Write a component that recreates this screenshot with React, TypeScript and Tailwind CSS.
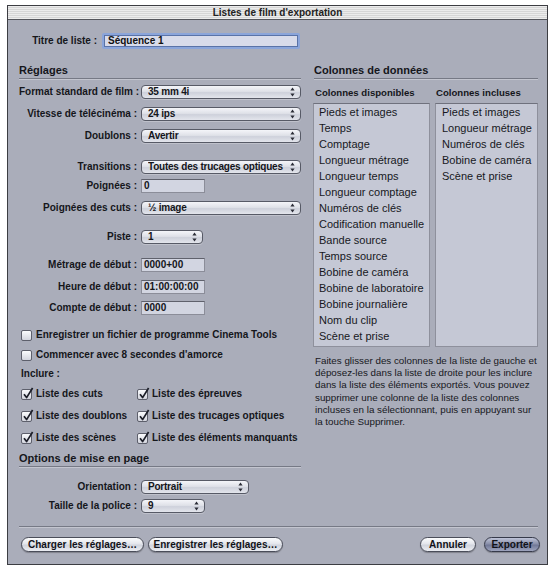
import type { ReactNode } from "react";

const available = [
  "Pieds et images",
  "Temps",
  "Comptage",
  "Longueur métrage",
  "Longueur temps",
  "Longueur comptage",
  "Numéros de clés",
  "Codification manuelle",
  "Bande source",
  "Temps source",
  "Bobine de caméra",
  "Bobine de laboratoire",
  "Bobine journalière",
  "Nom du clip",
  "Scène et prise",
];

const included = [
  "Pieds et images",
  "Longueur métrage",
  "Numéros de clés",
  "Bobine de caméra",
  "Scène et prise",
];

const helpLines = [
  "Faites glisser des colonnes de la liste de gauche et",
  "déposez-les dans la liste de droite pour les inclure",
  "dans la liste des éléments exportés. Vous pouvez",
  "supprimer une colonne de la liste des colonnes",
  "incluses en la sélectionnant, puis en appuyant sur",
  "la touche Supprimer.",
];

function Arrows() {
  return (
    <svg viewBox="0 0 5 10" className="mr-[5px] h-[10px] w-[5px] shrink-0">
      <path d="M2.5 0.5 L4.6 3.4 L0.4 3.4 Z" fill="#2a2c36" />
      <path d="M2.5 9.5 L4.6 6.6 L0.4 6.6 Z" fill="#2a2c36" />
    </svg>
  );
}

function Popup({ value, className }: { value: string; className: string }) {
  return (
    <div
      className={`flex h-[14px] shrink-0 items-center rounded-[4px] border border-[#575a66] bg-[linear-gradient(180deg,#f4f5f9_0%,#dfe1e8_45%,#ced1db_55%,#e3e5ec_100%)] pl-[6px] shadow-[0_1px_0_rgba(255,255,255,0.25)] ${className}`}
    >
      <span className="flex-1 overflow-hidden whitespace-nowrap text-[10px] font-bold leading-[12px] tracking-[-0.22px] text-[#14151a]">
        {value}
      </span>
      <Arrows />
    </div>
  );
}

function Field({ value }: { value: string }) {
  return (
    <div className="flex h-[14px] w-[64px] shrink-0 items-center border border-[#8b8d99] border-t-[#5f616c] bg-[#d2d5e1] pl-[2px]">
      <span className="text-[10px] font-bold leading-[12px] text-[#14151a]">{value}</span>
    </div>
  );
}

function Row({ label, mt, children }: { label: string; mt: string; children: ReactNode }) {
  return (
    <div className={`flex h-[14px] items-center ${mt}`}>
      <span className="w-[118px] shrink-0 whitespace-nowrap text-right text-[10px] font-bold leading-[12px] text-[#15161b]">
        {label}
      </span>
      <div className="ml-[4px] flex">{children}</div>
    </div>
  );
}

function Heading({ children, className }: { children: ReactNode; className: string }) {
  return (
    <div
      className={`h-[17px] border-b border-[#767985] pt-[1px] text-[11px] font-bold leading-[14px] text-[#15161b] shadow-[0_1px_0_#c3c5cf] ${className}`}
    >
      {children}
    </div>
  );
}

function Check({ checked }: { checked?: boolean }) {
  return (
    <span className="relative block h-[11px] w-[11px] shrink-0 rounded-[2px] border border-[#5d5f6b] bg-[linear-gradient(180deg,#fafbfd,#d3d5de)]">
      {checked && (
        <svg viewBox="0 0 12 13" className="absolute left-[0px] top-[-3px] h-[13px] w-[12px]">
          <path d="M2 7.2 L4.6 10.6 L10.6 1" fill="none" stroke="#1c1e28" strokeWidth="1.7" strokeLinejoin="round" />
        </svg>
      )}
    </span>
  );
}

function CheckItem({ label, checked }: { label: string; checked?: boolean }) {
  return (
    <div className="flex h-[12px] items-center gap-[4px]">
      <Check checked={checked} />
      <span className="whitespace-nowrap text-[10px] font-bold leading-[12px] text-[#15161b]">{label}</span>
    </div>
  );
}

function PushButton({ label, className, primary }: { label: string; className: string; primary?: boolean }) {
  return (
    <button
      className={`flex h-[15px] items-center justify-center rounded-full border text-[10px] font-bold leading-[12px] text-[#111218] shadow-[0_1px_1px_rgba(0,0,0,0.25)] ${
        primary
          ? "border-[#363a4a] bg-[linear-gradient(180deg,#bfc4d8_0%,#8a90aa_45%,#717897_55%,#9ea4be_100%)]"
          : "border-[#4a4d59] bg-[linear-gradient(180deg,#fbfcfd_0%,#e4e6ec_45%,#d1d4dd_55%,#eceef3_100%)]"
      } ${className}`}
    >
      {label}
    </button>
  );
}

export default function App() {
  return (
    <div className="h-[567px] w-[554px] bg-white pt-[5px] pl-[7px] font-['Liberation_Sans',Arial,sans-serif]">
      <div className="flex h-[560px] w-[541px] flex-col border border-[#3c3d42] bg-[#aaadba]">
        {/* barre de titre */}
        <div className="flex h-[14px] items-center justify-center border-b border-[#55565c] bg-[image:repeating-linear-gradient(180deg,#ececec_0px,#ececec_1px,#d6d6d6_1px,#d6d6d6_2px)]">
          <span className="text-[10px] font-bold leading-[12px] text-[#222]">Listes de film d'exportation</span>
        </div>

        <div className="mt-[13px] flex h-[16px] items-center">
          <span className="w-[89px] shrink-0 text-right text-[10px] font-bold leading-[12px] text-[#15161b]">
            Titre de liste :
          </span>
          <div className="ml-[5px] h-[16px] w-[198px] rounded-[2px] bg-[#8ba5da] p-[2px]">
            <div className="flex h-full items-center border border-[#5a73a8] bg-[#d8dbea] pl-[3px]">
              <span className="text-[10px] font-bold leading-[12px] text-[#111]">Séquence 1</span>
            </div>
          </div>
        </div>

        <div className="flex">
          {/* colonne gauche */}
          <div className="ml-[11px] flex w-[282px] flex-col">
            <Heading className="mt-[13px]">Réglages</Heading>
            <Row label="Format standard de film :" mt="mt-[6px]">
              <Popup value="35 mm 4i" className="w-[160px]" />
            </Row>
            <Row label="Vitesse de télécinéma :" mt="mt-[8px]">
              <Popup value="24 ips" className="w-[160px]" />
            </Row>
            <Row label="Doublons :" mt="mt-[8px]">
              <Popup value="Avertir" className="w-[160px]" />
            </Row>
            <Row label="Transitions :" mt="mt-[17px]">
              <Popup value="Toutes des trucages optiques" className="w-[160px]" />
            </Row>
            <Row label="Poignées :" mt="mt-[5px]">
              <Field value="0" />
            </Row>
            <Row label="Poignées des cuts :" mt="mt-[8px]">
              <Popup value="½ image" className="w-[160px]" />
            </Row>
            <Row label="Piste :" mt="mt-[15px]">
              <Popup value="1" className="w-[62px]" />
            </Row>
            <Row label="Métrage de début :" mt="mt-[14px]">
              <Field value="0000+00" />
            </Row>
            <Row label="Heure de début :" mt="mt-[8px]">
              <Field value="01:00:00:00" />
            </Row>
            <Row label="Compte de début :" mt="mt-[7px]">
              <Field value="0000" />
            </Row>

            <div className="ml-[2px] mt-[14px]">
              <CheckItem label="Enregistrer un fichier de programme Cinema Tools" />
            </div>
            <div className="ml-[2px] mt-[8px]">
              <CheckItem label="Commencer avec 8 secondes d'amorce" />
            </div>
            <div className="ml-[2px] mt-[7px] h-[12px] text-[10px] font-bold leading-[12px] text-[#15161b]">
              Inclure :
            </div>
            <div className="ml-[2px] mt-[8px] grid grid-cols-[116px_1fr] gap-y-[10px]">
              <CheckItem label="Liste des cuts" checked />
              <CheckItem label="Liste des épreuves" checked />
              <CheckItem label="Liste des doublons" checked />
              <CheckItem label="Liste des trucages optiques" checked />
              <CheckItem label="Liste des scènes" checked />
              <CheckItem label="Liste des éléments manquants" checked />
            </div>

            <Heading className="mt-[6px]">Options de mise en page</Heading>
            <Row label="Orientation :" mt="mt-[13px]">
              <Popup value="Portrait" className="w-[108px]" />
            </Row>
            <Row label="Taille de la police :" mt="mt-[5px]">
              <Popup value="9" className="w-[64px]" />
            </Row>
          </div>

          {/* colonne droite */}
          <div className="ml-[12px] flex w-[225px] flex-col">
            <Heading className="ml-[1px] mt-[13px]">Colonnes de données</Heading>
            <div className="mt-[8px] flex h-[12px] text-[9.6px] font-bold leading-[12px] text-[#15161b]">
              <span className="ml-[2px] w-[121px]">Colonnes disponibles</span>
              <span>Colonnes incluses</span>
            </div>
            <div className="mt-[4px] flex h-[244px] gap-[5px]">
              <div className="w-[117px] border border-[#8e909c] border-t-[#6f717d] bg-[#c5c8d5] pl-[5px]">
                {available.map((item) => (
                  <div key={item} className="h-[16px] whitespace-nowrap text-[11px] leading-[16px] text-[#17181d]">
                    {item}
                  </div>
                ))}
              </div>
              <div className="flex-1 border border-[#8e909c] border-t-[#6f717d] bg-[#c5c8d5] pl-[6px]">
                {included.map((item) => (
                  <div key={item} className="h-[16px] whitespace-nowrap text-[11px] leading-[16px] text-[#17181d]">
                    {item}
                  </div>
                ))}
              </div>
            </div>
            <div className="ml-[2px] mt-[8px] text-[9.8px] leading-[12.2px] text-[#17181d]">
              {helpLines.map((line) => (
                <div key={line} className="whitespace-nowrap">
                  {line}
                </div>
              ))}
            </div>
          </div>
        </div>

        <div className="ml-[11px] mt-[13px] w-[519px] border-t border-[#767985] shadow-[0_1px_0_#c3c5cf]" />

        <div className="mt-[10px] flex items-center pl-[13px] pr-[7px]">
          <PushButton label="Charger les réglages…" className="w-[123px]" />
          <PushButton label="Enregistrer les réglages…" className="ml-[4px] w-[135px]" />
          <div className="flex-1" />
          <PushButton label="Annuler" className="w-[56px]" />
          <PushButton label="Exporter" className="ml-[8px] w-[56px]" primary />
        </div>
      </div>
    </div>
  );
}
